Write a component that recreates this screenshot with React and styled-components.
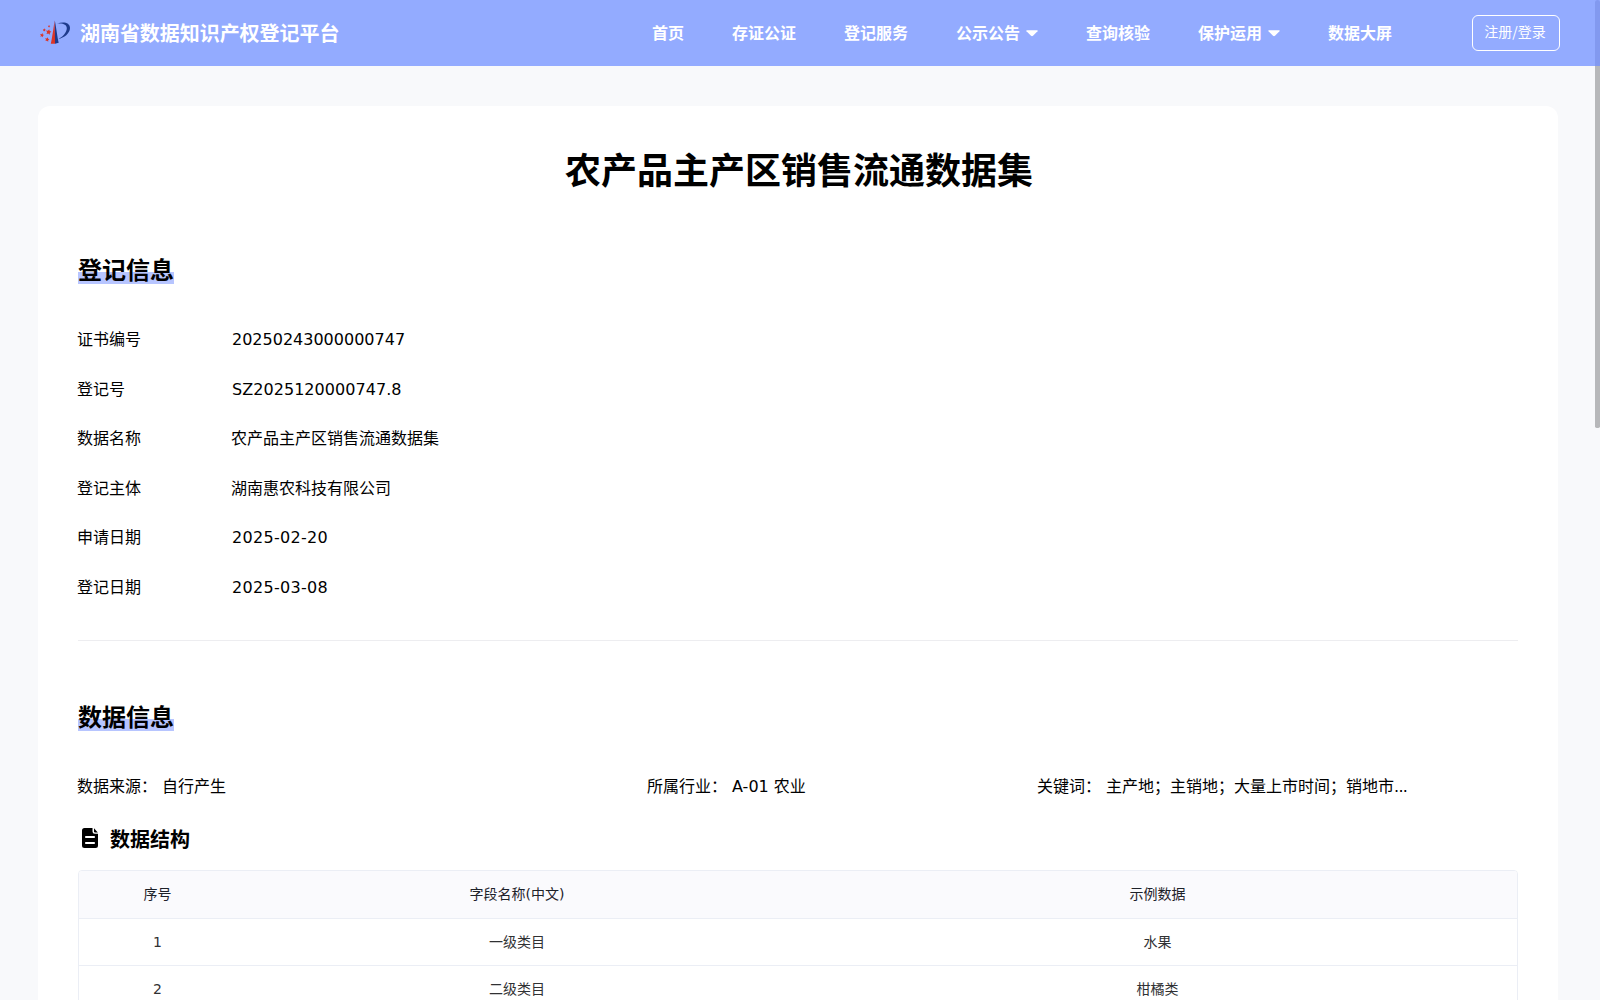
import React from "react";
import styled, { createGlobalStyle } from "styled-components";

const GlobalStyle = createGlobalStyle`
  * { box-sizing: border-box; }
  html, body { margin: 0; padding: 0; }
  body {
    background: #f8f9fb;
    color: #000;
    font-family: "DejaVu Sans", "Noto Sans CJK SC", sans-serif;
    font-size: 16px;
    overflow: hidden;
  }
  h1, h2, h3, p { margin: 0; }
`;

const Page = styled.div`
  height: 1000px;
  overflow: hidden;
`;

const Header = styled.header`
  display: flex;
  align-items: center;
  height: 66px;
  padding: 0 40px;
  background: #93abff;
  color: #fff;
`;

const Brand = styled.div`
  display: flex;
  align-items: center;
  gap: 10px;
  width: 612px;
  padding-bottom: 1px;
`;

const BrandMark = styled.svg`
  width: 30px;
  height: 24px;
  flex: none;
  margin-bottom: 1px;
`;

const BrandName = styled.span`
  font-family: "Noto Sans CJK SC", sans-serif;
  font-size: 20px;
  line-height: 24px;
  font-weight: 700;
  letter-spacing: -0.05px;
  white-space: nowrap;
`;

const Nav = styled.nav`
  display: flex;
  align-items: center;
  gap: 48px;
`;

const NavItem = styled.a`
  display: flex;
  align-items: center;
  gap: 6px;
  padding-bottom: 2px;
  font-family: "Noto Sans CJK SC", sans-serif;
  font-size: 16px;
  line-height: 24px;
  font-weight: 700;
  white-space: nowrap;
`;

const Caret = styled.svg`
  width: 12px;
  height: 7px;
  margin-top: 2px;
  fill: #fff;
`;

const LoginButton = styled.button`
  display: flex;
  align-items: center;
  justify-content: center;
  width: 88px;
  height: 36px;
  margin-left: auto;
  padding: 0 2px 4px 0;
  border: 1px solid #fff;
  border-radius: 6px;
  background: transparent;
  color: #fff;
  font-family: "Noto Sans CJK SC", sans-serif;
  font-weight: 400;
  font-size: 14px;
  line-height: 20px;
`;

const Card = styled.main`
  margin: 40px 42px 0 38px;
  padding: 40px 40px 0;
  border-radius: 12px;
  background: #fff;
`;

const Title = styled.h1`
  font-family: "Noto Sans CJK SC", sans-serif;
  font-size: 36px;
  line-height: 44px;
  font-weight: 700;
  text-align: center;
  padding-left: 2px;
`;

const SectionTitle = styled.h2`
  width: fit-content;
  margin-top: ${(p) => p.$top}px;
  font-family: "Noto Sans CJK SC", sans-serif;
  font-size: 24px;
  line-height: 30px;
  height: 32px;
  font-weight: 700;
  background: linear-gradient(to bottom, transparent 18px, #b7c5ff 18px, #b7c5ff 30px, transparent 30px);
`;

const Facts = styled.div`
  display: grid;
  grid-auto-rows: 49.5px;
  margin-top: 29px;
`;

const Fact = styled.div`
  display: grid;
  grid-template-columns: 154px 1fr;
  align-items: center;
  padding-top: 1px;
  line-height: 24px;
`;

const FactLabel = styled.span`
  margin-left: -1px;
`;

const FactValue = styled.span`
  margin-left: ${(p) => (p.$latin ? 0 : -1)}px;
  letter-spacing: ${(p) => p.$spacing || 0}px;
`;

const Divider = styled.div`
  height: 1px;
  margin-top: 28px;
  background: #ededf0;
`;

const Summary = styled.div`
  display: grid;
  grid-template-columns: 570px 390px 1fr;
  margin-top: 42px;
  margin-left: -1px;
  line-height: 24px;
`;

const SummaryItem = styled.p`
  display: flex;
  gap: 5px;
  white-space: nowrap;
`;

const Ellipsis = styled.span`
  letter-spacing: -0.7px;
`;

const StructureTitle = styled.h3`
  display: flex;
  align-items: center;
  gap: 12px;
  margin-top: 26px;
  padding-left: 4px;
  font-family: "Noto Sans CJK SC", sans-serif;
  font-size: 20px;
  line-height: 28px;
  font-weight: 700;
`;

const FileIcon = styled.svg`
  width: 16px;
  height: 20px;
  margin-bottom: 2px;
`;

const Table = styled.div`
  margin-top: 17px;
  border: 1px solid #ebeef5;
  border-radius: 4px;
  overflow: hidden;
`;

const TableRow = styled.div`
  display: grid;
  grid-template-columns: 157px 562px 1fr;
  align-items: center;
  height: ${(p) => (p.$head ? 48 : 47)}px;
  padding-bottom: ${(p) => (p.$head ? 2 : 0)}px;
  border-bottom: 1px solid #ebeef5;
  background: ${(p) => (p.$head ? "#fafafd" : "#fff")};
  color: ${(p) => (p.$head ? "#1d2129" : "#303133")};
  font-size: 14px;
  line-height: 22px;
  text-align: center;
`;

const ScrollThumb = styled.div`
  position: fixed;
  top: 0;
  right: 0;
  width: 5px;
  height: 428px;
  border-radius: 3px 3px 2px 2px;
  background: linear-gradient(to bottom, #8299ef 66px, #b7b8ba 66px);
`;

const navItems = [
  { label: "首页" },
  { label: "存证公证" },
  { label: "登记服务" },
  { label: "公示公告", menu: true },
  { label: "查询核验" },
  { label: "保护运用", menu: true },
  { label: "数据大屏" },
];

const facts = [
  { label: "证书编号", value: "20250243000000747", latin: true },
  { label: "登记号", value: "SZ2025120000747.8", latin: true, spacing: 0.05 },
  { label: "数据名称", value: "农产品主产区销售流通数据集" },
  { label: "登记主体", value: "湖南惠农科技有限公司" },
  { label: "申请日期", value: "2025-02-20", latin: true, spacing: 0.3 },
  { label: "登记日期", value: "2025-03-08", latin: true, spacing: 0.3 },
];

const rows = [
  ["1", "一级类目", "水果"],
  ["2", "二级类目", "柑橘类"],
];

function Star({ x, y, r }) {
  const points = Array.from({ length: 10 }, (_, i) => {
    const a = (Math.PI / 5) * i - Math.PI / 2 + 0.2;
    const d = i % 2 ? r * 0.5 : r;
    return `${(x + Math.cos(a) * d).toFixed(2)},${(y + Math.sin(a) * d).toFixed(2)}`;
  }).join(" ");
  return <polygon points={points} fill="#dc3426" />;
}

function Logo() {
  return (
    <BrandMark viewBox="0 0 30 24">
      <Star x={9} y={6.3} r={1.3} />
      <Star x={4.3} y={10} r={1.7} />
      <Star x={8.6} y={12} r={2.9} />
      <Star x={2} y={15.2} r={2.2} />
      <Star x={7.2} y={19.5} r={2.4} />
      <path d="M14.6 0.5 L15.2 23.8 L10.8 23.8 C12.2 18 13.5 8 14.6 0.5Z" fill="#dc3426" />
      <path d="M14.8 0.5 C16.3 8 17.4 17 18.7 22.7 L15 23.8Z" fill="#1e3a8c" />
      <path d="M17 3.8 C23 1.2 30 2.4 30 8.1 C30 13.5 24 18 18.3 19.2 C23 16.6 26.8 12.4 26.8 8.3 C26.8 4.6 22.6 3 17 3.8Z" fill="#1e3a8c" />
    </BrandMark>
  );
}

export default function App() {
  return (
    <Page>
      <GlobalStyle />
      <Header>
        <Brand>
          <Logo />
          <BrandName>湖南省数据知识产权登记平台</BrandName>
        </Brand>
        <Nav>
          {navItems.map((item) => (
            <NavItem key={item.label}>
              {item.label}
              {item.menu && (
                <Caret viewBox="0 0 12 7">
                  <path d="M0.8 0.3 H11.2 Q12 0.5 11.5 1.2 L7 5.8 Q6 6.6 5 5.8 L0.5 1.2 Q0 0.5 0.8 0.3Z" />
                </Caret>
              )}
            </NavItem>
          ))}
        </Nav>
        <LoginButton>注册/登录</LoginButton>
      </Header>
      <Card>
        <Title>农产品主产区销售流通数据集</Title>
        <SectionTitle $top={64}>登记信息</SectionTitle>
        <Facts>
          {facts.map((f) => (
            <Fact key={f.label}>
              <FactLabel>{f.label}</FactLabel>
              <FactValue $latin={f.latin} $spacing={f.spacing}>
                {f.value}
              </FactValue>
            </Fact>
          ))}
        </Facts>
        <Divider />
        <SectionTitle $top={60}>数据信息</SectionTitle>
        <Summary>
          <SummaryItem>
            <span>数据来源：</span>
            <span>自行产生</span>
          </SummaryItem>
          <SummaryItem>
            <span>所属行业：</span>
            <span>A-01 农业</span>
          </SummaryItem>
          <SummaryItem>
            <span>关键词：</span>
            <span>
              主产地；主销地；大量上市时间；销地市<Ellipsis>...</Ellipsis>
            </span>
          </SummaryItem>
        </Summary>
        <StructureTitle>
          <FileIcon viewBox="0 0 16 20">
            <path
              fillRule="evenodd"
              d="M2.5 0 H10.5 V3.5 Q10.5 5.8 12.8 5.8 H16 V17.5 Q16 20 13.5 20 H2.5 Q0 20 0 17.5 V2.5 Q0 0 2.5 0Z M3.8 8 H12.2 Q13 8.1 13 9 Q13 9.9 12.2 10 H3.8 Q3 9.9 3 9 Q3 8.1 3.8 8Z M3.8 14 H12.2 Q13 14.1 13 15 Q13 15.9 12.2 16 H3.8 Q3 15.9 3 15 Q3 14.1 3.8 14Z"
            />
            <path d="M12 0.2 L15.8 4.4 H13.2 Q12 4.4 12 3.2Z" />
          </FileIcon>
          数据结构
        </StructureTitle>
        <Table>
          <TableRow $head>
            <span>序号</span>
            <span>字段名称(中文)</span>
            <span>示例数据</span>
          </TableRow>
          {rows.map((cells) => (
            <TableRow key={cells[0]}>
              {cells.map((cell) => (
                <span key={cell}>{cell}</span>
              ))}
            </TableRow>
          ))}
        </Table>
      </Card>
      <ScrollThumb />
    </Page>
  );
}
